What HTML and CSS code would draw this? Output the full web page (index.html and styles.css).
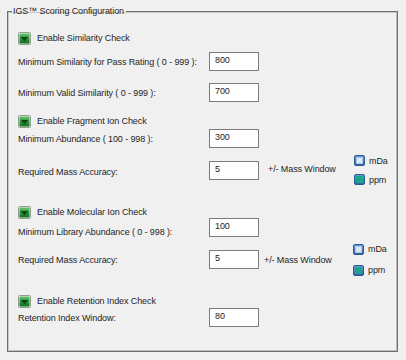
FILE: index.html
```html
<!DOCTYPE html>
<html>
<head>
<meta charset="utf-8">
<link rel="stylesheet" href="styles.css">
</head>
<body>
<fieldset class="group">
  <legend class="title">IGS™ Scoring Configuration</legend>

  <div class="check r-cb1">
    <svg class="cb" width="13" height="13" viewBox="0 0 13 13"><use href="#cbox"/></svg>
    <span>Enable Similarity Check</span>
  </div>
  <div class="field r-in1">
    <span class="label">Minimum Similarity for Pass Rating ( 0 - 999 ):</span>
    <div class="input">800</div>
  </div>
  <div class="field r-in2">
    <span class="label">Minimum Valid Similarity ( 0 - 999 ):</span>
    <div class="input">700</div>
  </div>

  <div class="check r-cb2">
    <svg class="cb" width="13" height="13" viewBox="0 0 13 13"><use href="#cbox"/></svg>
    <span>Enable Fragment Ion Check</span>
  </div>
  <div class="field r-in3">
    <span class="label">Minimum Abundance ( 100 - 998 ):</span>
    <div class="input">300</div>
  </div>
  <div class="field mass r-m1">
    <span class="label lbl-low">Required Mass Accuracy:</span>
    <div class="input">5</div>
    <span class="window w1">+/- Mass Window</span>
    <div class="units">
      <div class="unit"><svg width="11" height="11" viewBox="0 0 11 11"><use href="#roff"/></svg><span>mDa</span></div>
      <div class="unit"><svg width="11" height="11" viewBox="0 0 11 11"><use href="#ron"/></svg><span>ppm</span></div>
    </div>
  </div>

  <div class="check r-cb3">
    <svg class="cb" width="13" height="13" viewBox="0 0 13 13"><use href="#cbox"/></svg>
    <span>Enable Molecular Ion Check</span>
  </div>
  <div class="field r-in4">
    <span class="label lbl-low2">Minimum Library Abundance ( 0 - 998 ):</span>
    <div class="input">100</div>
  </div>
  <div class="field mass r-m2">
    <span class="label">Required Mass Accuracy:</span>
    <div class="input">5</div>
    <span class="window w2">+/- Mass Window</span>
    <div class="units units2">
      <div class="unit"><svg width="11" height="11" viewBox="0 0 11 11"><use href="#roff"/></svg><span>mDa</span></div>
      <div class="unit"><svg width="11" height="11" viewBox="0 0 11 11"><use href="#ron"/></svg><span>ppm</span></div>
    </div>
  </div>

  <div class="check r-cb4">
    <svg class="cb" width="13" height="13" viewBox="0 0 13 13"><use href="#cbox"/></svg>
    <span>Enable Retention Index Check</span>
  </div>
  <div class="field r-in5">
    <span class="label">Retention Index Window:</span>
    <div class="input">80</div>
  </div>
</fieldset>

<svg class="defs" width="0" height="0">
  <defs>
    <linearGradient id="gg" x1="0" y1="0" x2="0" y2="1">
      <stop offset="0" stop-color="#6cc46f"/>
      <stop offset="0.45" stop-color="#2f9a3c"/>
      <stop offset="1" stop-color="#136a24"/>
    </linearGradient>
    <linearGradient id="bg" x1="0" y1="0" x2="0" y2="1">
      <stop offset="0" stop-color="#6d9fd6"/>
      <stop offset="1" stop-color="#2f5f9c"/>
    </linearGradient>
    <g id="cbox">
      <rect x="0.5" y="0.5" width="12" height="12" rx="1" fill="#e8efe8" stroke="#8fa08f"/>
      <rect x="1.5" y="1.5" width="10" height="10" fill="url(#gg)"/>
      <path d="M2.8 5 L6.5 9.2 L10.2 5 Z" fill="#0b4514"/>
    </g>
    <g id="roff">
      <rect x="0.5" y="0.5" width="10" height="10" rx="1.5" fill="url(#bg)" stroke="#2c5a92"/>
      <rect x="2.5" y="2.5" width="6" height="6" fill="#dce8f6" stroke="#a9c4e6"/>
    </g>
    <g id="ron">
      <rect x="0.5" y="0.5" width="10" height="10" rx="1.5" fill="url(#bg)" stroke="#2c5a92"/>
      <rect x="2" y="2" width="7" height="7" fill="#1aa58e"/>
    </g>
  </defs>
</svg>
</body>
</html>
```
FILE: styles.css
```css
html, body {
  margin: 0;
  padding: 0;
  background: #f0f0f0;
}

body {
  padding: 5px 0 0 7px;
  font-family: "Liberation Sans", Arial, sans-serif;
  font-size: 9px;
  letter-spacing: -0.1px;
  color: #1e1e1e;
}

.defs {
  position: absolute;
  width: 0;
  height: 0;
}

.group {
  box-sizing: border-box;
  margin: 0;
  width: 391px;
  height: 347px;
  padding: 0 0 0 10px;
  border: 1px solid #6f6f6f;
  box-shadow: inset 1px 1px 0 #c9c9c9, inset -1px -1px 0 #bdbdbd;
  min-inline-size: 0;
}

.title {
  padding: 0 2px 0 1px;
  margin-left: -6px;
  line-height: 12px;
  height: 12px;
  color: #1e1e1e;
}

.check {
  display: flex;
  align-items: center;
  height: 12px;
  gap: 6px;
}

.cb {
  flex: none;
  display: block;
}

.field {
  display: flex;
  align-items: center;
  height: 19px;
}

.label {
  width: 191px;
  flex: none;
}

.lbl-low { padding-top: 3px; }
.lbl-low2 { padding-top: 8px; }

.input {
  box-sizing: border-box;
  width: 50px;
  height: 19px;
  background: #fff;
  border: 1px solid #7c7c7c;
  padding: 0 0 0 5px;
  line-height: 15px;
  flex: none;
}

.mass { height: 30px; }

.window {
  flex: none;
  color: #1e1e1e;
}
.w1 { margin-left: 9px; width: 86px; margin-top: -2px; }
.w2 { margin-left: 5px; width: 89px; }

.units {
  display: flex;
  flex-direction: column;
  gap: 8px;
}
.units2 { gap: 10px; }

.unit {
  display: flex;
  align-items: center;
  gap: 4px;
  height: 11px;
}
.unit svg { display: block; flex: none; }

.r-cb1 { margin-top: 15px; }
.r-in1 { margin-top: 8px; }
.r-in2 { margin-top: 12px; }
.r-cb2 { margin-top: 13px; }
.r-in3 { margin-top: 2px; }
.r-m1  { margin-top: 7px; }
.r-cb3 { margin-top: 21px; }
.r-in4 { margin-top: 0; }
.r-m2  { margin-top: 7px; height: 31px; }
.r-cb4 { margin-top: 20px; }
.r-in5 { margin-top: 1px; }
```
